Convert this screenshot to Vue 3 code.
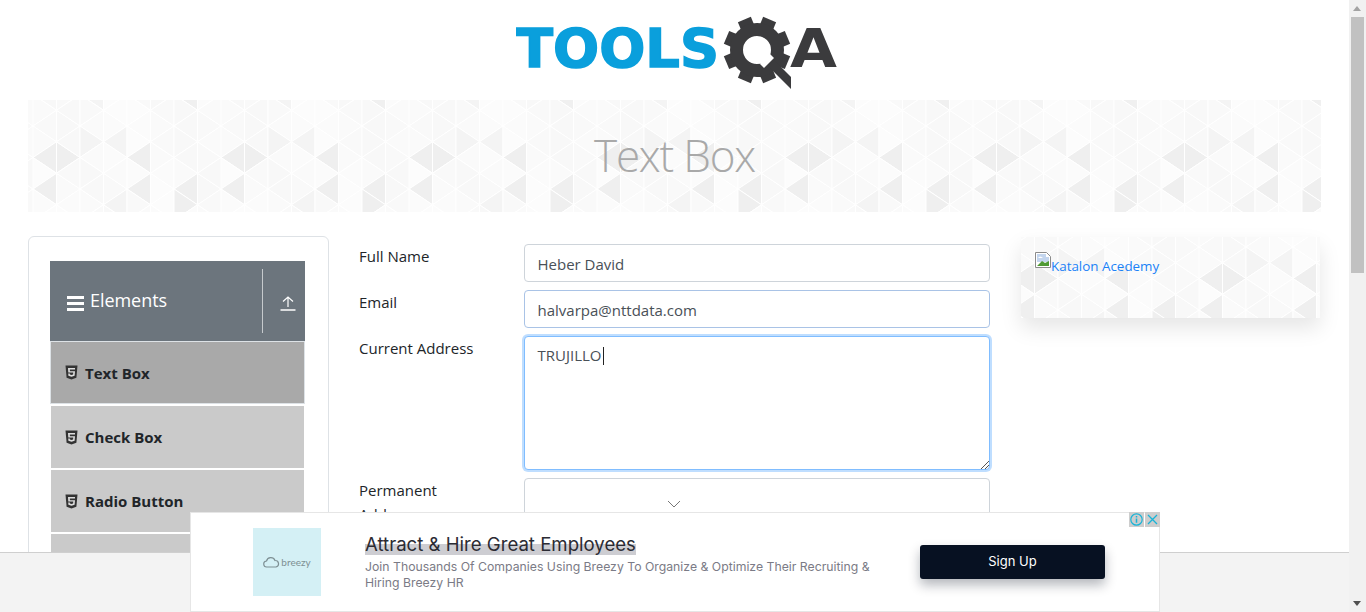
<script setup>
const cw = 23.5
const h = 31.5

// darker triangles of the tile, key is strip,row,side
const shades = {
  '0,0,R': '#efefef', '1,0,L': '#efefef', '2,0,L': '#f4f4f4', '3,0,R': '#f4f4f4',
  '4,0,R': '#efefef', '0,1,R': '#efefef', '4,1,R': '#efefef', '6,1,R': '#efefef',
  '6,2,L': '#efefef', '3,2,R': '#f4f4f4', '6,4,R': '#f0f0f0', '2,4,R': '#f4f4f4',
}
const light = ['#fafafa', '#f9f9f9', '#fcfcfc', '#f8f8f8', '#fbfbfb']

function buildTile() {
  let out = ''
  for (let s = 0; s < 8; s++) {
    const x = s * cw
    const odd = s % 2 === 1
    for (let r = -1; r < 7; r++) {
      const y0 = (odd ? h / 2 : 0) + r * h
      const y1 = (odd ? 0 : h / 2) + r * h
      const k = ((r % 6) + 6) % 6
      const left = shades[`${s},${k},L`] || light[(s * 3 + k * 2) % 5]
      const right = shades[`${s},${k},R`] || light[(s * 2 + k * 3 + 1) % 5]
      out += `<polygon fill='${left}' points='${x},${y0} ${x},${y0 + h} ${x + cw},${y0 + h / 2}'/>`
      out += `<polygon fill='${right}' points='${x + cw},${y1} ${x + cw},${y1 + h} ${x},${y1 + h / 2}'/>`
    }
  }
  const svg = `<svg xmlns='http://www.w3.org/2000/svg' width='188' height='189' stroke='#fff' stroke-width='1'>${out}</svg>`
  return `url("data:image/svg+xml,${encodeURIComponent(svg)}")`
}
const pattern = buildTile()

const teeth = [0, 45, 90, 135, 180, 225, 270, 315]
const menu = ['Text Box', 'Check Box', 'Radio Button', 'Web Tables']
</script>

<template>
  <div class="page">
    <div class="main">
      <header class="logo-row">
        <svg class="logo" width="330" height="92" viewBox="0 0 330 92">
          <text x="0" y="67" class="logo-tools" textLength="203" lengthAdjust="spacingAndGlyphs">TOOLS</text>
          <g transform="translate(241 50)">
            <rect v-for="t in teeth" :key="t" x="-7" y="-33" width="14" height="14" fill="#3b3b3d" :transform="`rotate(${t + 22.5})`" />
            <circle r="20.5" fill="none" stroke="#3b3b3d" stroke-width="13" />
          </g>
          <polygon points="244,64 254,54 258,58 248,68" fill="#fff" />
          <polygon points="252,66 258,60 275,77 275,89" fill="#3b3b3d" />
          <text x="274" y="67" class="logo-a" textLength="47" lengthAdjust="spacingAndGlyphs">A</text>
        </svg>
      </header>

      <div class="banner" :style="{ backgroundImage: pattern }">
        <h1>Text Box</h1>
      </div>

      <div class="content">
        <aside class="side-card">
          <div class="group-head">
            <div class="group-title">
              <svg width="17" height="15" viewBox="0 0 17 15" class="burger">
                <rect y="0" width="17" height="3" fill="#fff" />
                <rect y="6" width="17" height="3" fill="#fff" />
                <rect y="12" width="17" height="3" fill="#fff" />
              </svg>
              <span>Elements</span>
            </div>
            <div class="group-toggle">
              <svg width="16" height="16" viewBox="0 0 16 16" fill="none" stroke="#fff" stroke-width="1.2">
                <path d="M8 12V2M3 6.5L8 2l5 4.5" />
                <path d="M0.5 15h15" stroke-width="1.5" />
              </svg>
            </div>
          </div>
          <div v-for="(item, i) in menu" :key="item" class="menu-item" :class="{ active: i === 0 }">
            <svg width="13" height="15" viewBox="0 0 13 15">
              <path d="M0.5 0.5h12l-1.1 12.2L6.5 14.5l-4.9-1.8z" fill="#333" />
              <path d="M3 3h7v1.6H4.8l.1 1.7H10l-.4 4.5-3.1 1-3.1-1-.2-2.2h1.6l.1 1 1.6.5 1.6-.5.2-2.2H3.3z" fill="#ddd" />
            </svg>
            <span>{{ item }}</span>
          </div>
        </aside>

        <form class="form" @submit.prevent>
          <label>Full Name</label>
          <input type="text" value="Heber David" />
          <label>Email</label>
          <input class="touched" type="text" value="halvarpa@nttdata.com" />
          <label>Current Address</label>
          <div class="area-wrap">
            <div class="area">TRUJILLO<span class="caret"></span></div>
            <svg class="grip" width="9" height="9" viewBox="0 0 9 9" stroke="#555" stroke-width="1">
              <path d="M1 9L9 1M5 9l4-4" />
            </svg>
          </div>
          <label>Permanent Address</label>
          <div class="perm">
            <svg class="chevron" width="14" height="8" viewBox="0 0 14 8" fill="none" stroke="#777" stroke-width="1">
              <path d="M1 1l6 6 6-6" />
            </svg>
          </div>
        </form>

        <div class="promo" :style="{ backgroundImage: pattern }">
          <a class="promo-link" href="#">
            <svg width="16" height="16" viewBox="0 0 16 16">
              <path d="M0.5 0.5h11l4 4v11h-15z" fill="#fff" stroke="#8b8b8b" />
              <path d="M2 2h9v3h3v5H2z" fill="#c3d5ee" />
              <path d="M2 14l5-5 3 2 4-2v5z" fill="#4f9a34" />
              <path d="M3 6q2-3 5 0z" fill="#fff" />
            </svg><span>Katalon Acedemy</span></a>
        </div>
      </div>

      <footer class="bottom-bar"></footer>
    </div>

    <div class="scrollbar">
      <div class="arrow up"></div>
      <div class="track"><div class="thumb"></div></div>
      <div class="arrow down"></div>
    </div>

    <div class="ad">
      <div class="ad-logo">
        <svg width="17" height="11" viewBox="0 0 17 11" fill="none" stroke="#7d8f93" stroke-width="1.2">
          <path d="M4 10a3 3 0 0 1-.5-6A4.5 4.5 0 0 1 12 3.5 3.3 3.3 0 0 1 13 10z" />
        </svg>
        <span>breezy</span>
      </div>
      <div class="ad-copy">
        <div class="ad-title">Attract &amp; Hire Great Employees</div>
        <p>Join Thousands Of Companies Using Breezy To Organize &amp; Optimize Their Recruiting &amp; Hiring Breezy HR</p>
      </div>
      <button class="ad-btn">Sign Up</button>
      <div class="ad-tools">
        <span class="ad-tool">
          <svg width="13" height="13" viewBox="0 0 13 13" fill="none" stroke="#18b4d8" stroke-width="1.2">
            <circle cx="6.5" cy="6.5" r="5.7" />
            <path d="M6.5 5.5v4.2M6.5 3v1.5" stroke-width="1.5" />
          </svg>
        </span>
        <span class="ad-tool">
          <svg width="11" height="11" viewBox="0 0 11 11" stroke="#18b4d8" stroke-width="1.3">
            <path d="M1 1l9 9M10 1l-9 9" />
          </svg>
        </span>
      </div>
    </div>
  </div>
</template>

<style>
html,
body {
  margin: 0;
  overflow: hidden;
}
</style>

<style scoped>
.page {
  position: relative;
  display: flex;
  width: 1366px;
  height: 612px;
  overflow: hidden;
  background: #fff;
  font-family: "Open Sans", "Noto Sans", sans-serif;
  color: #212529;
}

.main {
  position: relative;
  flex: 1;
  min-width: 0;
  overflow: hidden;
}

.logo-row {
  display: flex;
  justify-content: center;
  height: 100px;
}

.logo {
  display: block;
  margin-left: 12px;
}

.logo-tools {
  font-family: "DejaVu Sans", sans-serif;
  font-weight: 700;
  font-size: 54px;
  fill: #0a9fdc;
  stroke: #0a9fdc;
  stroke-width: 1.5;
}

.logo-a {
  font-family: "DejaVu Sans", sans-serif;
  font-weight: 700;
  font-size: 54px;
  fill: #3b3b3d;
}

.banner {
  display: flex;
  align-items: center;
  justify-content: center;
  height: 112px;
  margin: 0 28px;
  background-color: #fff;
  background-position: 5px 25.5px;
}

.banner h1 {
  margin: 0 0 2px;
  font-size: 44px;
  font-weight: 300;
  color: #a9a9a9;
  letter-spacing: -1.2px;
}

.content {
  display: flex;
  align-items: flex-start;
  padding: 24px 28px 0;
}

.side-card {
  flex: none;
  box-sizing: border-box;
  width: 301px;
  padding: 24px 23px 0 21px;
  border: 1px solid #dee2e6;
  border-radius: 6px;
}

.group-head {
  display: flex;
  height: 80px;
  background: #6c757d;
  color: #fff;
}

.group-title {
  flex: 1;
  display: flex;
  align-items: center;
  gap: 6px;
  padding: 0 0 2px 17px;
  font-size: 18px;
  letter-spacing: -0.05px;
}

.burger {
  margin-top: 6px;
}

.group-toggle {
  display: flex;
  align-items: center;
  justify-content: center;
  box-sizing: border-box;
  width: 43px;
  margin: 8px 0;
  padding: 4px 0 0 8px;
  border-left: 1px solid #c6cacd;
}

.menu-item {
  display: flex;
  align-items: center;
  gap: 7px;
  box-sizing: border-box;
  height: 62px;
  margin: 0 1px 2px;
  padding-left: 14px;
  background: #cacaca;
  font-size: 15px;
  font-weight: 700;
}

.menu-item.active {
  margin: 0 0 2px;
  height: 63px;
  border: 1px solid #dde2e6;
  background: #a9a9a9;
}

.form {
  flex: none;
  display: grid;
  grid-template-columns: 165px 466px;
  row-gap: 8px;
  margin: 8px 31px 0 30px;
  font-size: 15px;
}

.form label {
  width: 130px;
  line-height: 24px;
}

.form input,
.area,
.perm {
  box-sizing: border-box;
  width: 466px;
  border: 1px solid #ced4da;
  border-radius: 4px;
  background: #fff;
  color: #495057;
  font: inherit;
}

.form input {
  height: 38px;
  padding: 2px 13px 0 12.5px;
}

.form input.touched {
  border-color: #a9c3e6;
}

.area-wrap {
  position: relative;
}

.area {
  height: 134px;
  padding: 8px 12.5px;
  border-color: #80bdff;
  box-shadow: 0 0 0 2px rgba(0, 123, 255, 0.25);
}

.caret {
  display: inline-block;
  width: 1px;
  height: 18px;
  margin-left: 1px;
  background: #222;
  vertical-align: text-bottom;
}

.grip {
  position: absolute;
  right: 1px;
  bottom: 1px;
}

.perm {
  height: 38px;
  display: flex;
  justify-content: center;
  align-items: flex-end;
  padding: 0 0 7px 0;
}

.chevron {
  margin-left: -167px;
}

.promo {
  flex: none;
  box-sizing: border-box;
  width: 299px;
  height: 81px;
  margin-top: 1px;
  padding: 15px 14px;
  background-color: #fff;
  background-position: -10px 10px;
  box-shadow: 0 10px 20px rgba(0, 0, 0, 0.1);
}

.promo-link {
  display: flex;
  align-items: flex-start;
  color: #1a82f7;
  font-size: 13.4px;
  line-height: 26px;
  text-decoration: none;
}

.promo-link span {
  padding-top: 1px;
}

.bottom-bar {
  position: absolute;
  left: 0;
  right: 0;
  bottom: 0;
  height: 59px;
  border-top: 1px solid #cfcfcf;
  background: #f3f3f3;
}

.scrollbar {
  flex: none;
  display: flex;
  flex-direction: column;
  width: 17px;
  background: #f1f1f1;
}

.arrow {
  position: relative;
  height: 17px;
}

.arrow::after {
  content: "";
  position: absolute;
  left: 4px;
  border-left: 4px solid transparent;
  border-right: 4px solid transparent;
}

.arrow.up::after {
  top: 6px;
  border-bottom: 5px solid #a3a3a3;
}

.arrow.down::after {
  top: 6px;
  border-top: 5px solid #505050;
}

.track {
  flex: 1;
  padding: 0 2px;
}

.thumb {
  height: 256px;
  background: #c1c1c1;
}

.ad {
  position: absolute;
  left: 190px;
  bottom: 0;
  display: flex;
  box-sizing: border-box;
  width: 970px;
  height: 100px;
  padding: 15px 54px 0 62px;
  border: 1px solid #e6e6e6;
  background: #fff;
  font-family: "Inter", "Open Sans", sans-serif;
}

.ad-logo {
  flex: none;
  display: flex;
  align-items: center;
  justify-content: center;
  gap: 1px;
  width: 68px;
  height: 68px;
  background: #d4f0f5;
  color: #7d8f93;
  font-size: 10px;
  font-family: "Lato", sans-serif;
}

.ad-copy {
  flex: none;
  width: 520px;
  margin: 0 35px 0 44px;
  padding-top: 4px;
}

.ad-title {
  display: inline;
  font-size: 18.6px;
  line-height: 25px;
  color: #2b2b33;
  background: linear-gradient(transparent 50%, #cdcdd2 50%);
}

.ad-copy p {
  margin: 2px 0 0;
  font-size: 12.26px;
  line-height: 16px;
  color: #7b7b86;
}

.ad-btn {
  flex: none;
  width: 185px;
  height: 34px;
  margin: 17px 0 0 0;
  padding: 0 0 3px;
  border: 0;
  border-radius: 3px;
  background: #071122;
  color: #fff;
  font: inherit;
  font-size: 13px;
  box-shadow: 0 6px 12px rgba(7, 17, 34, 0.3);
}

.ad-tools {
  position: absolute;
  top: -1px;
  right: -1px;
  display: flex;
  gap: 1px;
}

.ad-tool {
  display: flex;
  align-items: center;
  justify-content: center;
  width: 15px;
  height: 15px;
  background: #cdcdcd;
}
</style>
